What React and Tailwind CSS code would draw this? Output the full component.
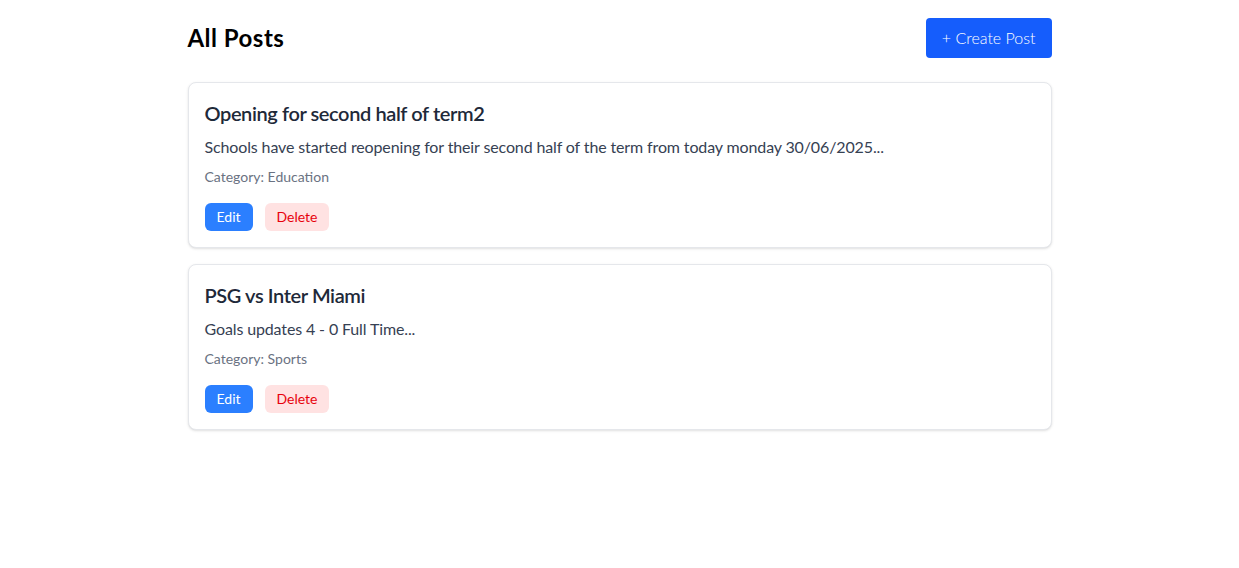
import React from "react";

const posts = [
  {
    id: 1,
    title: "Opening for second half of term2",
    body: "Schools have started reopening for their second half of the term from today monday 30/06/2025...",
    category: "Education",
  },
  {
    id: 2,
    title: "PSG vs Inter Miami",
    body: "Goals updates 4 - 0 Full Time...",
    category: "Sports",
  },
];

function PostCard({ post }) {
  return (
    <div className="border border-gray-200 rounded-lg shadow-sm p-4 mb-4 bg-white">
      <h2 className="text-xl font-semibold text-gray-800 tracking-[-0.02em]">{post.title}</h2>
      <p className="mt-2 text-gray-700 tracking-[-0.008em]">{post.body}</p>
      <p className="mt-2 text-sm text-gray-500">Category: {post.category}</p>
      <div className="mt-4 flex gap-3">
        <button className="bg-blue-500 text-white text-sm px-3 py-1 rounded-md">Edit</button>
        <button className="bg-red-100 text-red-600 text-sm px-3 py-1 rounded-md">Delete</button>
      </div>
    </div>
  );
}

export default function App() {
  return (
    <div className="min-h-screen bg-white font-['Lato',sans-serif]">
      <div className="max-w-4xl mx-auto px-4 pt-[18px]">
        <div className="flex justify-between items-center mb-6">
          <h1 className="text-2xl font-bold text-black tracking-[0.02em]">All Posts</h1>
          <button className="bg-blue-600 text-white font-light px-4 py-2 rounded">+ Create Post</button>
        </div>
        {posts.map((post) => (
          <PostCard key={post.id} post={post} />
        ))}
      </div>
    </div>
  );
}
